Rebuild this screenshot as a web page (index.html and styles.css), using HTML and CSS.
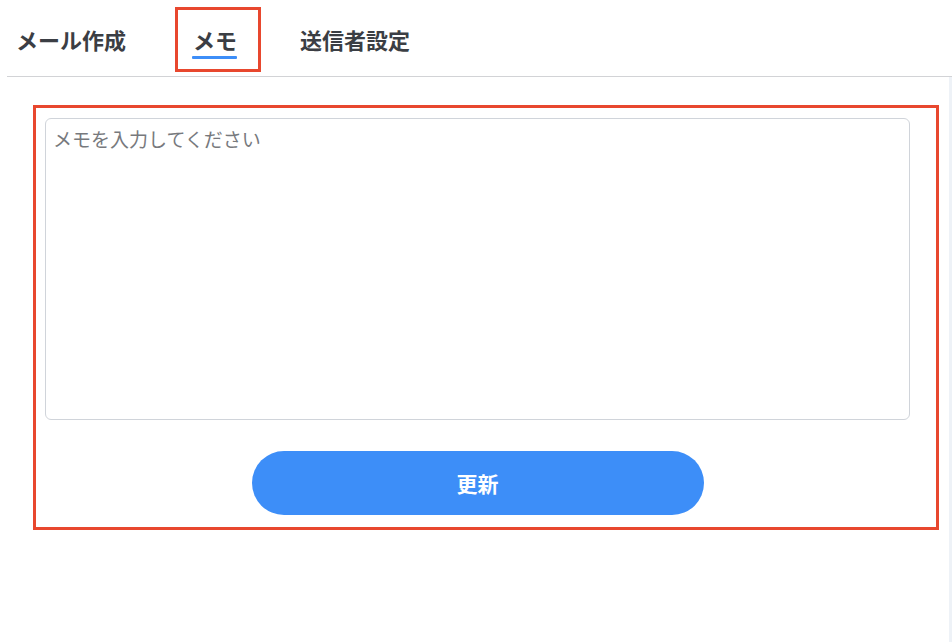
FILE: index.html
```html
<!DOCTYPE html>
<html lang="ja">
<head>
<meta charset="utf-8">
<title>メモ</title>
<link rel="stylesheet" href="styles.css">
</head>
<body>
<div class="page">
  <nav class="tabs">
    <div class="tab tab-first"><span class="tab-label">メール作成</span></div>
    <div class="tab tab-active annot-tab"><span class="tab-label">メモ</span><span class="tab-bar"></span></div>
    <div class="tab tab-third"><span class="tab-label">送信者設定</span></div>
  </nav>
  <div class="body-row">
    <main class="content">
      <div class="annot-box">
        <form class="memo">
          <textarea class="memo-input" placeholder="メモを入力してください"></textarea>
          <button type="button" class="memo-btn">更新</button>
        </form>
      </div>
    </main>
    <aside class="side-strip"></aside>
  </div>
</div>
</body>
</html>
```

FILE: styles.css
```css
* { box-sizing: border-box; }
html, body {
  margin: 0;
  padding: 0;
  background: #ffffff;
  font-family: "Noto Sans CJK JP", "Noto Sans", sans-serif;
}
.page {
  width: 952px;
  height: 642px;
  display: flex;
  flex-direction: column;
  overflow: hidden;
}
.tabs {
  display: flex;
  align-items: flex-start;
  height: 77px;
  margin-left: 7px;
  border-bottom: 1px solid #d2d3d6;
}
.tab {
  display: flex;
  flex-direction: column;
  align-items: flex-start;
  padding-top: 24px;
}
.tab-label {
  font-size: 22px;
  line-height: 30px;
  font-weight: 700;
  color: #3b3e44;
  white-space: nowrap;
}
.tab-first { padding-left: 9px; }
.annot-tab {
  margin-left: 49px;
  margin-top: 7px;
  border: 3px solid #e8472e;
  padding: 14px 21px 9px 15px;
  height: 65px;
}
.tab-bar {
  display: block;
  width: 45px;
  height: 3px;
  margin-top: 2px;
  margin-left: -1px;
  background: #3d8ef8;
  border-radius: 1px;
}
.tab-third { margin-left: 39px; }
.body-row {
  flex: 1;
  display: flex;
}
.content {
  flex: 1;
  padding: 28px 10px 0 33px;
}
.side-strip {
  width: 3px;
  background: #eef2f7;
}
.annot-box {
  border: 3px solid #e8472e;
  padding: 10px 26px 12px 9px;
}
.memo {
  display: flex;
  flex-direction: column;
  align-items: center;
  margin: 0;
}
.memo-input {
  display: block;
  width: 100%;
  height: 302px;
  border: 1px solid #d0d4da;
  border-radius: 6px;
  padding: 6px 7px;
  font-family: "Noto Sans CJK JP", "Noto Sans", sans-serif;
  font-size: 19px;
  line-height: 28px;
  color: #333;
  resize: none;
  outline: none;
}
.memo-input::placeholder {
  color: #77797d;
}
.memo-btn {
  margin-top: 31px;
  width: 452px;
  height: 64px;
  border: none;
  border-radius: 32px;
  background: #3d8ef8;
  color: #ffffff;
  font-family: "Noto Sans CJK JP", "Noto Sans", sans-serif;
  font-size: 21px;
  font-weight: 700;
  cursor: pointer;
}
```
